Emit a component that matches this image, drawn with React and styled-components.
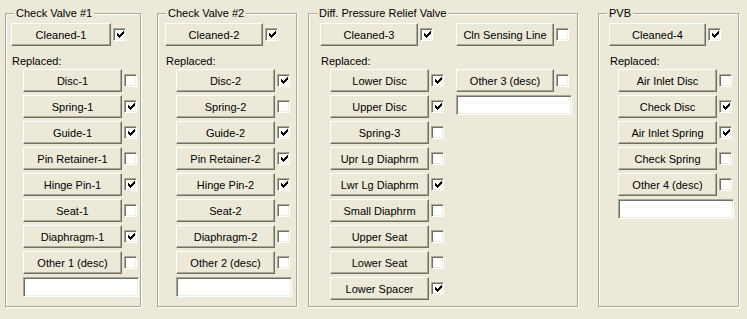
import React from "react";
import styled, { createGlobalStyle } from "styled-components";

const Global = createGlobalStyle`
    body {
        margin: 0;
        background: #ece9d8;
        font-family: "Liberation Sans", Arial, sans-serif;
        font-size: 11px;
        color: #000;
    }
`;

const Page = styled.div`
    display: flex;
    align-items: flex-start;
    padding: 13px 0 0 5px;
    height: 319px;
    box-sizing: border-box;
`;

const Group = styled.div`
    position: relative;
    box-sizing: border-box;
    width: ${(p) => p.$w}px;
    height: 294px;
    margin-left: ${(p) => p.$ml || 0}px;
    padding: 9px 0 0 ${(p) => p.$pl}px;
    border: 1px solid #aca899;
    box-shadow: inset 1px 1px 0 #fff, 1px 1px 0 #fff;
`;

const Caption = styled.span`
    position: absolute;
    top: -7px;
    left: 8px;
    padding: 0 2px;
    line-height: 13px;
    background: #ece9d8;
    white-space: nowrap;
`;

const Columns = styled.div`
    display: flex;
    align-items: flex-start;
    gap: 12px;
`;

const Col = styled.div`
    display: flex;
    flex-direction: column;
    width: ${(p) => (p.$w ? `${p.$w}px` : "auto")};
`;

const Label = styled.div`
    margin: 9px 0 1px 1px;
    line-height: 13px;
`;

const List = styled.div`
    display: flex;
    flex-direction: column;
    gap: 3px;
    margin-top: ${(p) => p.$top || 0}px;
    padding-left: ${(p) => p.$indent || 0}px;
`;

const Row = styled.div`
    display: flex;
    align-items: center;
    gap: 2px;
`;

const Button = styled.button`
    box-sizing: border-box;
    width: ${(p) => p.$w || 99}px;
    height: 23px;
    padding: 0;
    background: #ece9d8;
    border: 1px solid;
    border-color: #fff #716f64 #716f64 #fff;
    box-shadow: inset -1px -1px 0 #aca899;
    font-family: "Liberation Sans", Arial, sans-serif;
    font-size: 11px;
    color: #000;
    white-space: nowrap;
`;

const Box = styled.span`
    box-sizing: border-box;
    display: flex;
    align-items: center;
    justify-content: center;
    width: 13px;
    height: 13px;
    background: #fff;
    border: 1px solid;
    border-color: #aca899 #fff #fff #aca899;
    box-shadow: inset 1px 1px 0 #716f64, inset -1px -1px 0 #f1efe2;
`;

const Field = styled.input`
    box-sizing: border-box;
    width: 116px;
    height: 20px;
    margin: 0;
    padding: 0 3px;
    background: #fff;
    border: 1px solid;
    border-color: #aca899 #fff #fff #aca899;
    box-shadow: inset 1px 1px 0 #716f64, inset -1px -1px 0 #f1efe2;
    font-family: "Liberation Sans", Arial, sans-serif;
    font-size: 11px;
    outline: none;
`;

const Check = ({ on }) => (
    <Box>
        {on && (
            <svg width="7" height="7" viewBox="0 0 7 7" shapeRendering="crispEdges" style={{ marginLeft: 1 }}>
                <path
                    d="M0 2h1v3H0z M1 3h1v3H1z M2 4h1v3H2z M3 3h1v3H3z M4 2h1v3H4z M5 1h1v3H5z M6 0h1v3H6z"
                    fill="#000"
                />
            </svg>
        )}
    </Box>
);

const Item = ({ label, on, w }) => (
    <Row>
        <Button $w={w}>{label}</Button>
        <Check on={on} />
    </Row>
);

const Parts = ({ items, indent, desc }) => (
    <List $indent={indent}>
        {items.map(([label, on]) => (
            <Item key={label} label={label} on={on} />
        ))}
        {desc && <Field defaultValue="" />}
    </List>
);

const valve1 = [
    ["Disc-1", false],
    ["Spring-1", true],
    ["Guide-1", true],
    ["Pin Retainer-1", false],
    ["Hinge Pin-1", true],
    ["Seat-1", false],
    ["Diaphragm-1", true],
    ["Other 1 (desc)", false],
];

const valve2 = [
    ["Disc-2", true],
    ["Spring-2", false],
    ["Guide-2", true],
    ["Pin Retainer-2", true],
    ["Hinge Pin-2", true],
    ["Seat-2", false],
    ["Diaphragm-2", false],
    ["Other 2 (desc)", false],
];

const relief = [
    ["Lower Disc", true],
    ["Upper Disc", true],
    ["Spring-3", false],
    ["Upr Lg Diaphrm", false],
    ["Lwr Lg Diaphrm", true],
    ["Small Diaphrm", false],
    ["Upper Seat", false],
    ["Lower Seat", false],
    ["Lower Spacer", true],
];

const pvb = [
    ["Air Inlet Disc", false],
    ["Check Disc", true],
    ["Air Inlet Spring", true],
    ["Check Spring", false],
    ["Other 4 (desc)", false],
];

const App = () => {
    return (
        <>
            <Global />
            <Page>
                <Group $w={136} $pl={5}>
                    <Caption>Check Valve #1</Caption>
                    <Item label="Cleaned-1" on w={100} />
                    <Label>Replaced:</Label>
                    <Parts items={valve1} indent={12} desc />
                </Group>

                <Group $w={140} $ml={16} $pl={7}>
                    <Caption>Check Valve #2</Caption>
                    <Item label="Cleaned-2" on w={98} />
                    <Label>Replaced:</Label>
                    <Parts items={valve2} indent={11} desc />
                </Group>

                <Group $w={270} $ml={11} $pl={11}>
                    <Caption>Diff. Pressure Relief Valve</Caption>
                    <Columns>
                        <Col $w={124}>
                            <Item label="Cleaned-3" on w={98} />
                            <Label>Replaced:</Label>
                            <Parts items={relief} indent={10} />
                        </Col>
                        <Col>
                            <Item label="Cln Sensing Line" on={false} w={98} />
                            <List $top={23}>
                                <Item label="Other 3 (desc)" on={false} w={98} />
                                <Field defaultValue="" />
                            </List>
                        </Col>
                    </Columns>
                </Group>

                <Group $w={141} $ml={20} $pl={10}>
                    <Caption>PVB</Caption>
                    <Item label="Cleaned-4" on w={97} />
                    <Label>Replaced:</Label>
                    <Parts items={pvb} indent={9} desc />
                </Group>
            </Page>
        </>
    );
};

export default App;
